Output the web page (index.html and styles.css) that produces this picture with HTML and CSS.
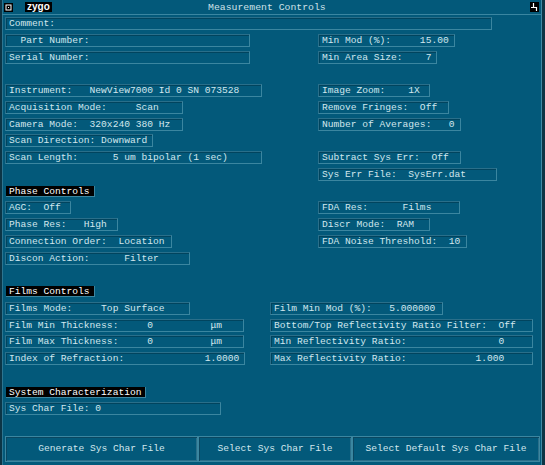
FILE: index.html
```html
<!DOCTYPE html>
<html lang="en">
<head>
  <meta charset="UTF-8">
  <title>Measurement Controls</title>
  <link rel="stylesheet" href="styles.css">
</head>
<body>
  <div class="window">
    <div class="titlebar">
      <svg class="close-ico" width="9" height="9" viewBox="0 0 9 9">
        <rect width="9" height="9" fill="#000"/>
        <rect x="2" y="2" width="5" height="5" fill="none" stroke="#fff" stroke-width="1"/>
        <rect x="4" y="4" width="1" height="1" fill="#fff"/>
      </svg>
      <span class="logo">zygo</span>
      <span class="title">Measurement Controls</span>
      <svg class="pin-ico" width="9" height="10" viewBox="0 0 9 10">
        <rect width="9" height="10" fill="#000"/>
        <path d="M3.5 1v4.5h3v3.5M1 5.5h2.5" fill="none" stroke="#fff" stroke-width="1.2"/>
      </svg>
    </div>

    <div class="panel">
      <div class="sec">
        <div class="fld w487 span">Comment:</div>
      </div>

      <div class="sec">
        <div class="fld w245">  Part Number:</div>
        <div class="fld w137">Min Mod (%):     15.00</div>
        <div class="fld w245">Serial Number:</div>
        <div class="fld w119">Min Area Size:    7</div>
      </div>

      <div class="sec skip">
        <div class="fld w257">Instrument:   NewView7000 Id 0 SN 073528</div>
        <div class="fld w112">Image Zoom:    1X</div>
        <div class="fld w178">Acquisition Mode:     Scan</div>
        <div class="fld w131">Remove Fringes:  Off</div>
        <div class="fld w178">Camera Mode:  320x240 380 Hz</div>
        <div class="fld w143">Number of Averages:   0</div>
        <div class="fld w148">Scan Direction: Downward</div>
        <div></div>
        <div class="fld w257">Scan Length:      5 um bipolar (1 sec)</div>
        <div class="fld w143">Subtract Sys Err:  Off</div>
        <div></div>
        <div class="fld w179">Sys Err File:  SysErr.dat</div>
      </div>

      <div class="sec">
        <div class="head span"><span>Phase Controls</span></div>
      </div>

      <div class="sec">
        <div class="fld w66">AGC:  Off</div>
        <div class="fld w142">FDA Res:      Films</div>
        <div class="fld w113">Phase Res:   High</div>
        <div class="fld w112">Discr Mode:  RAM</div>
        <div class="fld w167">Connection Order:  Location</div>
        <div class="fld w149">FDA Noise Threshold:  10</div>
        <div class="fld w185">Discon Action:      Filter</div>
      </div>

      <div class="sec skip">
        <div class="head span"><span>Films Controls</span></div>
      </div>

      <div class="sec films">
        <div class="fld w185">Films Mode:     Top Surface</div>
        <div class="fld w173">Film Min Mod (%):   5.000000</div>
        <div class="fld w239">Film Min Thickness:     0          μm</div>
        <div class="fld w263">Bottom/Top Reflectivity Ratio Filter:  Off</div>
        <div class="fld w239">Film Max Thickness:     0          μm</div>
        <div class="fld w263">Min Reflectivity Ratio:                0</div>
        <div class="fld w240">Index of Refraction:              1.0000</div>
        <div class="fld w263">Max Reflectivity Ratio:            1.000</div>
      </div>

      <div class="sec skip">
        <div class="head span"><span>System Characterization</span></div>
      </div>

      <div class="sec">
        <div class="fld w216 span">Sys Char File: 0</div>
      </div>

      <div class="buttons">
        <button class="btn b193">Generate Sys Char File</button>
        <button class="btn b154">Select Sys Char File</button>
        <button class="btn b188">Select Default Sys Char File</button>
      </div>
    </div>
  </div>
</body>
</html>
```

FILE: styles.css
```css
* {
  margin: 0;
  padding: 0;
  box-sizing: border-box;
}
body {
  background: #0b3040;
  font-family: "Liberation Mono", "DejaVu Sans Mono", monospace;
  font-size: 9.6px;
  color: #d2e7ed;
}
.window {
  width: 545px;
  height: 465px;
  background: #03597a;
  border-left: 2px solid #0c3546;
  border-right: 3px solid #0c3546;
  box-shadow: inset -1px 0 0 #3f8aa5, inset 1px 0 0 #2d7590;
  display: flex;
  flex-direction: column;
}
.titlebar {
  height: 15px;
  display: flex;
  align-items: center;
  padding: 0 3px 0 2px;
  border-bottom: 1px solid #3a86a1;
}
.logo {
  margin-left: 12px;
  background: #000;
  color: #fff;
  font-family: "Liberation Sans", sans-serif;
  font-weight: bold;
  font-size: 10px;
  line-height: 10px;
  height: 10px;
  padding: 0 2px;
}
.title {
  flex: 1;
  text-align: center;
  color: #cfe2e8;
  font-size: 9.8px;
  padding-right: 48px;
}
.panel {
  padding: 2px 0 0 3px;
  display: flex;
  flex-direction: column;
}
.sec {
  display: grid;
  grid-template-columns: 313px 1fr;
  grid-auto-rows: 16.75px;
}
.sec.films {
  grid-template-columns: 265px 1fr;
}
.skip {
  margin-top: 16.75px;
}
.span {
  grid-column: 1 / -1;
}
.fld {
  align-self: start;
  height: 13px;
  line-height: 11px;
  padding-left: 3px;
  white-space: pre;
  border: 1px solid #3b86a0;
  border-top-color: #2a6f8a;
  border-left-color: #2a6f8a;
  box-shadow: inset 1px 1px 0 #01445e;
  overflow: hidden;
}
.head {
  align-self: start;
  padding-top: 1px;
}
.head span {
  display: inline-block;
  margin-left: 1px;
  background: #000;
  color: #fff;
  height: 11px;
  line-height: 11px;
  padding: 0 4px 0 3px;
  border-right: 1px solid #3b86a0;
  border-bottom: 1px solid #3b86a0;
}
.w66 { width: 66px; }
.w112 { width: 112px; }
.w113 { width: 113px; }
.w119 { width: 119px; }
.w131 { width: 131px; }
.w137 { width: 137px; }
.w142 { width: 142px; }
.w143 { width: 143px; }
.w148 { width: 148px; }
.w149 { width: 149px; }
.w167 { width: 167px; }
.w173 { width: 173px; }
.w178 { width: 178px; }
.w179 { width: 179px; }
.w185 { width: 185px; }
.w216 { width: 216px; }
.w239 { width: 239px; }
.w240 { width: 240px; }
.w245 { width: 245px; }
.w257 { width: 257px; }
.w263 { width: 263px; }
.w487 { width: 487px; }
.buttons {
  margin-top: 16.75px;
  display: flex;
  height: 26px;
}
.btn {
  font: inherit;
  color: #d2e7ed;
  background: #03597a;
  border: 1px solid #3b86a0;
  box-shadow: inset 1px 1px 0 #0a4761, inset -1px -1px 0 #2a6f8a;
  height: 26px;
}
.b193 { width: 193px; }
.b154 { width: 154px; }
.b188 { width: 188px; }
```
